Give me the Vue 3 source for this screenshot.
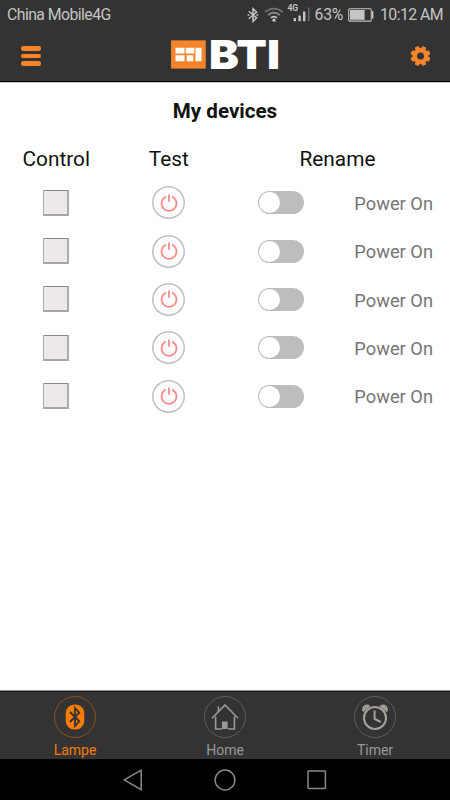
<template>
  <div class="screen">
    <header class="header">
      <div class="status-bar">
        <span class="carrier">China Mobile4G</span>
        <div class="status-icons">
          <svg class="bt" width="12" height="16" viewBox="0 0 12 16">
            <path d="M1.8 4.2 L9.6 10.9 L6 14.4 V1.6 L9.6 5.1 L1.8 11.8" />
            <path d="M.6 8h1.8M9.4 8h1.8" />
          </svg>
          <svg class="wifi" width="20" height="15" viewBox="0 0 20 15">
            <path class="dim" d="M1.2 5.2 A12.4 12.4 0 0 1 18.8 5.2" />
            <path class="mid" d="M4.2 8.1 A8.2 8.2 0 0 1 15.8 8.1" />
            <path d="M7 10.9 A4.2 4.2 0 0 1 13 10.9" />
            <circle cx="10" cy="13.2" r="1.6" />
          </svg>
          <div class="signal">
            <span class="signal-type">4G</span>
            <svg width="18" height="15" viewBox="0 0 18 15">
              <path d="M.6 11h2.4v3.2H.6zM5.4 8.4h2.4v5.8H5.4zM10 4.6h2.4v9.6h-2.4z" fill="#c4c4c4" />
              <path d="M15 .4h1.6v13.8h-1.6z" fill="#686868" />
            </svg>
          </div>
          <span class="percent">63%</span>
          <svg class="battery" width="26" height="14" viewBox="0 0 26 14">
            <rect x=".7" y=".7" width="22.6" height="12.4" rx="1.2" fill="none" stroke="#c4c4c4" stroke-width="1.1" />
            <path d="M2 2h14.6v9.8H2z" fill="#c4c4c4" />
            <path d="M24 3.2h1.4v7.4H24z" fill="#c4c4c4" />
          </svg>
          <span class="clock">10:12 AM</span>
        </div>
      </div>
      <div class="app-bar">
        <button class="icon-btn menu" aria-label="Menu">
          <span></span><span></span><span></span>
        </button>
        <svg class="logo" width="114" height="52" viewBox="0 -9 114 52">
          <rect x="1.7" y="2" width="35.4" height="29" fill="#f5842b" stroke="#173642" stroke-width=".7" />
          <path
            fill="#fff"
            d="M6.5 9.7h9v5.9h-9zM16.7 9.7h8.6v5.9h-8.6zM26.5 9.7h6v13.6h-6zM6.5 17.2h9v6.1h-9zM17.7 17.2h6.6v6.1h-6.6z"
          />
          <text x="40" y="31" textLength="71" lengthAdjust="spacingAndGlyphs">BTI</text>
        </svg>
        <button class="icon-btn" aria-label="Settings">
          <svg width="21" height="21" viewBox="-10.5 -10 21 21">
            <g fill="#f5842b">
              <path
                v-for="n in 8"
                :key="n"
                d="M-2.8 -6 L-1.9 -10 H1.9 L2.8 -6z"
                :transform="`rotate(${n * 45 + 22.5})`"
              />
            </g>
            <circle r="5.6" fill="none" stroke="#f5842b" stroke-width="4.2" />
          </svg>
        </button>
      </div>
    </header>

    <main class="content">
      <h1>My devices</h1>
      <div class="row head">
        <span>Control</span>
        <span>Test</span>
        <span>Rename</span>
      </div>
      <div v-for="device in devices" :key="device.id" class="row">
        <button class="control" aria-label="Control"></button>
        <button class="test" aria-label="Test">
          <svg width="20" height="20" viewBox="0 0 20 20">
            <path d="M6.2 4 A7.5 7.5 0 1 0 13.8 4" />
            <path d="M10 2.2 V8.2" />
          </svg>
        </button>
        <div class="rename">
          <button
            class="toggle"
            :class="{ on: device.on }"
            aria-label="Power"
            @click="device.on = !device.on"
          ></button>
          <span class="name">{{ device.name }}</span>
        </div>
      </div>
    </main>

    <nav class="tabs">
      <a
        v-for="tab in tabs"
        :key="tab"
        class="tab"
        :class="{ active: tab === current }"
        @click="current = tab"
      >
        <span class="tab-icon">
          <svg v-if="tab === 'Lampe'" width="20" height="26" viewBox="0 0 20 26">
            <rect x=".7" y=".5" width="18.6" height="25" rx="8.6" fill="#f57c00" />
            <path
              d="M5 8 L14.3 17.3 L10 22 V4 L14.3 8.7 L5 18"
              fill="none"
              stroke="#333"
              stroke-width="1.8"
            />
          </svg>
          <svg v-else-if="tab === 'Home'" width="28" height="28" viewBox="0 0 28 28">
            <g fill="none" stroke="#999" stroke-width="1.6">
              <path d="M1 15.3 L14 2 L27 15.3" />
              <path d="M4.6 13.5 V26 H11 M17 26 H23.4 V13.5" />
              <path d="M7.4 8.5 V3.3" />
            </g>
            <path d="M11 18.5h5.6V26H11z" fill="#999" />
          </svg>
          <svg v-else width="26" height="26" viewBox="0 0 26 26">
            <g fill="#9f9994">
              <path d="M1.2 8.2 A4.1 4.1 0 0 1 8.5 2.2z" />
              <path d="M24.8 8.2 A4.1 4.1 0 0 0 17.5 2.2z" />
            </g>
            <circle cx="13" cy="14" r="11" fill="#333" stroke="#a8a29d" stroke-width="2" />
            <path d="M12.6 6.4 V14.8 L18.6 18" fill="none" stroke="#a8a29d" stroke-width="2" />
          </svg>
        </span>
        <span class="tab-label">{{ tab }}</span>
      </a>
    </nav>

    <div class="system-nav">
      <svg width="20" height="22" viewBox="0 0 20 22">
        <path d="M18.2 1.2 V20.6 L1.3 10.9z" />
      </svg>
      <svg width="22" height="22" viewBox="0 0 22 22">
        <circle cx="11" cy="11" r="9.9" />
      </svg>
      <svg width="20" height="20" viewBox="0 0 20 20">
        <rect x="1" y="1" width="17.4" height="17.4" rx=".6" />
      </svg>
    </div>
  </div>
</template>

<script setup>
import { ref } from 'vue'

const devices = ref(
  Array.from({ length: 5 }, (_, i) => ({ id: i + 1, name: 'Power On', on: false }))
)

const tabs = ['Lampe', 'Home', 'Timer']
const current = ref('Lampe')
</script>

<style>
body {
  margin: 0;
  background: #fff;
}
</style>

<style scoped>
.screen {
  display: flex;
  flex-direction: column;
  width: 450px;
  height: 800px;
  overflow: hidden;
  background: #fff;
  font-family: Roboto, 'Liberation Sans', sans-serif;
}
button {
  padding: 0;
  border: none;
  background: none;
}
svg {
  display: block;
  flex: none;
}
.header {
  box-sizing: border-box;
  height: 82px;
  background: #333;
  border-bottom: 1px solid #000;
  box-shadow: 0 1px 0 #c8c8c8;
}
.status-bar {
  display: flex;
  justify-content: space-between;
  height: 29px;
  padding: 0 7px 0 7px;
  align-items: center;
  color: #c4c4c4;
  font-size: 15.8px;
  letter-spacing: -0.55px;
}
.status-icons {
  display: flex;
  align-items: center;
}
.bt {
  margin-right: 5px;
  fill: none;
  stroke: #c4c4c4;
  stroke-width: 1.5;
}
.wifi {
  margin-right: 4px;
  fill: none;
  stroke: #c4c4c4;
  stroke-width: 1.8;
}
.wifi .dim {
  stroke: #707070;
}
.wifi .mid {
  stroke: #909090;
}
.wifi circle {
  fill: #c4c4c4;
  stroke: none;
}
.signal {
  position: relative;
  padding-left: 5px;
  margin-right: 4px;
}
.signal-type {
  position: absolute;
  left: 0;
  top: -3px;
  font-size: 8.6px;
  line-height: 9px;
  font-weight: 700;
  letter-spacing: -0.2px;
}
.percent {
  margin-right: 5px;
  letter-spacing: -0.3px;
}
.battery {
  margin-right: 6px;
}
.app-bar {
  display: flex;
  justify-content: space-between;
  align-items: center;
  height: 52px;
  padding: 1px 19px 0 20.5px;
}
.icon-btn {
  width: 21px;
}
.menu {
  display: flex;
  flex-direction: column;
  gap: 3px;
}
.menu span {
  width: 20px;
  height: 4.4px;
  border-radius: 2.2px;
  background: #f5842b;
}
.logo {
  margin-top: -3px;
}
.logo text {
  font-family: Inter, sans-serif;
  font-size: 40px;
  font-weight: 900;
  fill: #fff;
}
.content {
  flex: 1;
}
h1 {
  margin: 0;
  padding-top: 16px;
  font-size: 20.6px;
  line-height: 26px;
  font-weight: 700;
  text-align: center;
  color: #111;
}
.row {
  display: grid;
  grid-template-columns: 1fr 1fr 2fr;
  align-items: center;
  justify-items: center;
  height: 48.4px;
}
.row.head {
  height: 40px;
  padding-top: 14.5px;
  font-size: 20.8px;
  color: #111;
}
.control {
  box-sizing: border-box;
  width: 26px;
  height: 26px;
  border: 1px solid #aaa;
  border-top-color: #888;
  border-right: 2px solid #b0acae;
  border-bottom: 2px solid #a8a4a6;
  border-radius: 1px;
  background: #ede8ec;
}
.test {
  box-sizing: border-box;
  display: flex;
  align-items: center;
  justify-content: center;
  width: 33px;
  height: 33px;
  border-radius: 50%;
  box-shadow: inset 0 0 0 1.5px #c0c0c0;
}
.test svg {
  fill: none;
  stroke: #ff8585;
  stroke-width: 1.7;
  stroke-linecap: round;
}
.rename {
  box-sizing: border-box;
  display: flex;
  align-items: center;
  justify-content: space-between;
  width: 100%;
  padding: 0 17px 0 33px;
}
.toggle {
  display: flex;
  box-sizing: border-box;
  width: 46px;
  height: 23px;
  padding: 1px;
  border-radius: 12px;
  background: #bdbdbd;
}
.toggle::before {
  content: '';
  width: 21px;
  height: 21px;
  border-radius: 50%;
  background: #fff;
}
.toggle.on {
  justify-content: flex-end;
  background: #f5842b;
}
.name {
  padding-top: 1.4px;
  font-size: 18.3px;
  color: #757575;
}
.tabs {
  box-sizing: border-box;
  display: grid;
  grid-template-columns: repeat(3, 1fr);
  height: 69px;
  border-top: 1px solid #8c9492;
  background: #333;
  box-shadow: inset 0 1px 0 #1c1c1c;
}
.tab {
  display: flex;
  flex-direction: column;
  align-items: center;
  padding-top: 5px;
  color: #999;
}
.tab-icon {
  box-sizing: border-box;
  display: flex;
  align-items: center;
  justify-content: center;
  width: 42px;
  height: 42px;
  border: 1px solid #5c5c5c;
  border-radius: 50%;
}
.tab-label {
  margin-top: 4px;
  font-size: 14px;
  line-height: 17px;
}
.tab.active {
  color: #f57c00;
}
.active .tab-icon {
  border-color: #8a5220;
}
.system-nav {
  display: flex;
  align-items: center;
  justify-content: center;
  gap: 71px;
  height: 41px;
  background: #000;
}
.system-nav svg {
  fill: none;
  stroke: #888;
  stroke-width: 1.5;
}
</style>
